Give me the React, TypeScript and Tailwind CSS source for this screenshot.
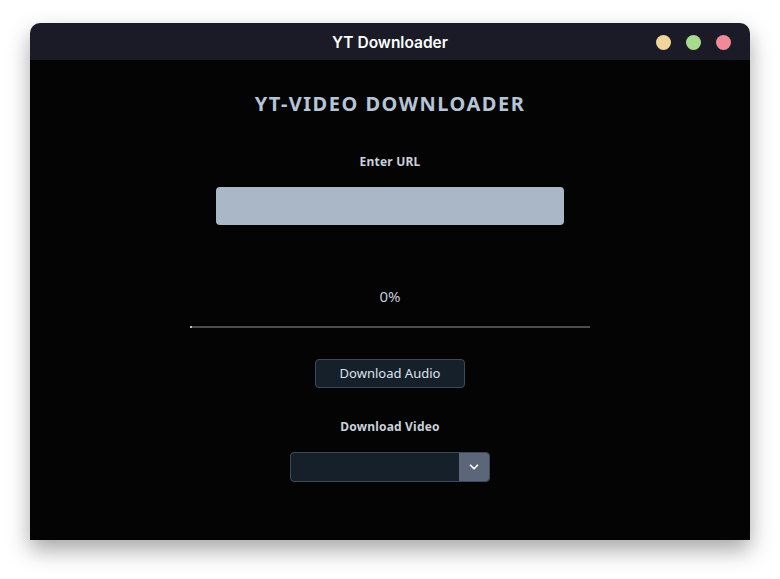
import { ChevronDown } from 'lucide-react';

export default function App() {
  return (
    <div className="w-[780px] h-[579px] bg-white pt-[23px] px-[30px] font-['Noto_Sans',sans-serif]">
      <div className="w-[720px] h-[517px] flex flex-col rounded-t-[10px] overflow-hidden shadow-[0_10px_22px_rgba(0,0,0,0.35)]">
        {/* Title bar */}
        <div className="h-[37px] shrink-0 bg-[#1a1b26] flex items-center relative">
          <div className="flex-1 text-center text-white text-[15.5px] font-semibold font-['Inter',sans-serif] pt-[3px]">
            YT Downloader
          </div>
          <div className="absolute right-[19px] top-[12px] flex gap-[15px]">
            <span className="w-[15px] h-[15px] rounded-full bg-[#efd59b]" />
            <span className="w-[15px] h-[15px] rounded-full bg-[#a7dc8f]" />
            <span className="w-[15px] h-[15px] rounded-full bg-[#ef8a99]" />
          </div>
        </div>

        {/* Content */}
        <div className="flex-1 bg-[#040404] flex flex-col items-center pt-[32px]">
          <h1 className="text-[20px] font-bold tracking-[1.5px] text-[#b6c5d6] leading-[24px]">
            YT-VIDEO DOWNLOADER
          </h1>

          <label className="mt-[38px] text-[12px] font-bold text-[#c9d1db] leading-[16px] tracking-[0.2px]">
            Enter URL
          </label>
          <input
            type="text"
            className="mt-[17px] w-[348px] h-[38px] rounded-[4px] bg-[#a9b7c6] outline-none px-3"
          />

          <div className="mt-[62px] text-[15px] text-[#c3cad3] leading-[19px]">0%</div>
          <div className="mt-[20px] w-[400px] h-[2px] bg-[#4d4d4d]">
            <div className="w-[2px] h-full bg-[#a9c4e0]" />
          </div>

          <button className="mt-[31px] w-[150px] h-[29px] rounded-[4px] bg-[#15202b] border border-[#3c4b5a] text-[13px] text-[#dde3ea]">
            Download Audio
          </button>

          <div className="mt-[31px] text-[12px] font-bold text-[#c9d1db] leading-[16px] tracking-[0.2px]">
            Download Video
          </div>
          <div className="mt-[17px] w-[200px] h-[30px] rounded-[4px] border border-[#3c4b5a] bg-[#15202b] flex overflow-hidden">
            <div className="flex-1" />
            <div className="w-[30px] bg-[#5b6679] flex items-center justify-center">
              <ChevronDown className="w-[14px] h-[14px] text-white" strokeWidth={3} />
            </div>
          </div>
        </div>
      </div>
    </div>
  );
}
